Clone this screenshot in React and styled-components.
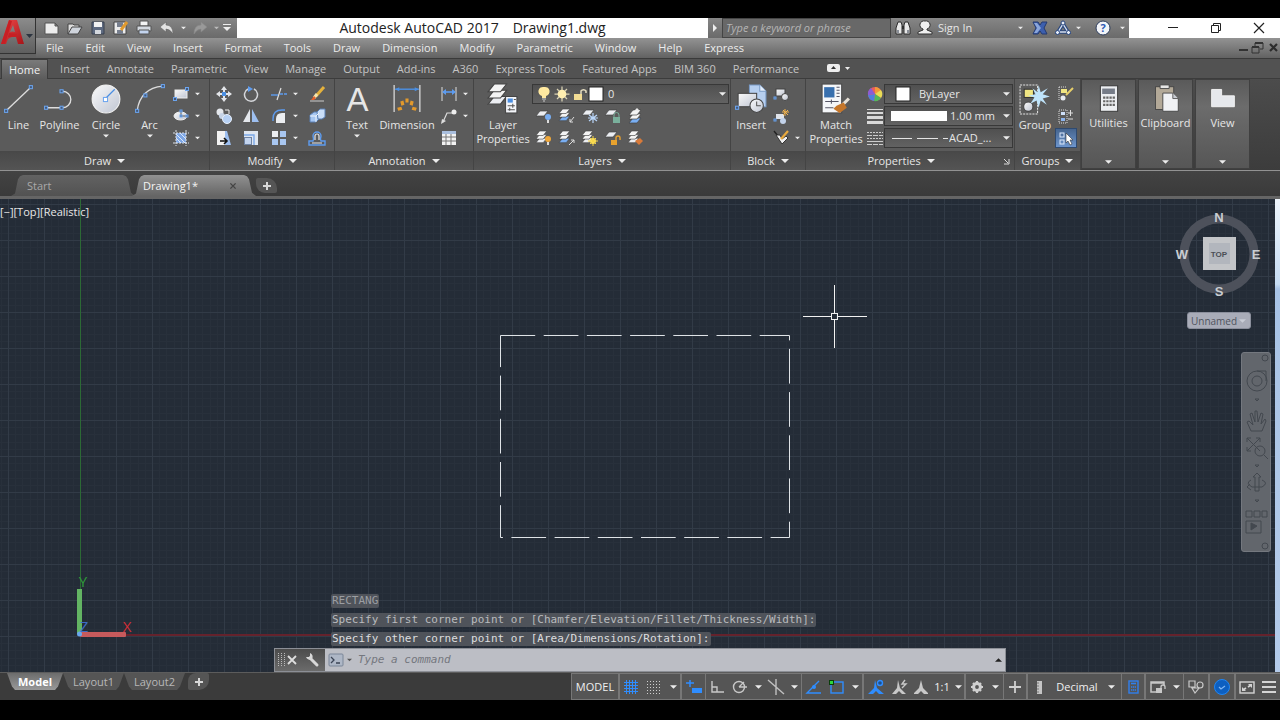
// Libraries
import React from 'react';

// Styles
import styled, { createGlobalStyle, css } from 'styled-components';

const GlobalStyle = createGlobalStyle`
  * {
    box-sizing: border-box;
  }
  html, body, #root {
    height: 100%;
  }
  body {
    margin: 0;
    background: #000;
    color: #e6e6e6;
    font-family: 'Open Sans', 'Noto Sans', sans-serif;
    font-size: 11px;
    line-height: 14px;
  }
  button, input, select {
    margin: 0;
    padding: 0;
    border: 0;
    background: none;
    color: inherit;
    font: inherit;
    appearance: none;
    outline: none;
  }
  button {
    cursor: pointer;
  }
  svg {
    display: block;
    flex: none;
  }
`;

const AppStyle = styled.div`
  display: flex;
  flex-direction: column;
  height: 100%;
  padding: 18px 0 20px;
  overflow: hidden;
`;

// Header
const HeaderStyle = styled.header`
  display: flex;
  align-items: flex-start;
  flex: none;
  background: #626262;
  border-bottom: 1px solid #3a3a3a;
`;

const AppButtonStyle = styled.button`
  display: flex;
  align-items: center;
  width: 36px;
  height: 36px;
  background: linear-gradient(#8c8c8c, #5e5e5e);
  border-right: 1px solid #333;
  border-bottom: 1px solid #333;
`;

const HeaderRowsStyle = styled.div`
  flex: 1;
`;

const TitleBarStyle = styled.div`
  display: flex;
  height: 20px;
`;

const TitleToolsStyle = styled.div`
  display: flex;
  align-items: center;
  padding: 0 4px;
  background: linear-gradient(#868686, #6a6a6a);
`;

const ToolSlotStyle = styled.button`
  display: flex;
  align-items: center;
  justify-content: center;
  flex: none;
  width: ${props => props.$w || 22}px;
  height: 18px;
`;

const TitleStyle = styled.h1`
  display: flex;
  align-items: center;
  justify-content: center;
  flex: 1;
  gap: 14px;
  margin: 0;
  background: #fff;
  color: #222;
  font-size: 14px;
  font-weight: 400;
  line-height: 20px;
`;

const SearchStyle = styled.input`
  width: 169px;
  padding: 0 3px;
  background: #686868;
  border: 1px solid #444;
  font-style: italic;
  &::placeholder {
    color: #b4b4b4;
    opacity: 1;
  }
`;

const SignInStyle = styled.button`
  width: 78px;
  text-align: left;
  white-space: nowrap;
`;

const WindowControlsStyle = styled.div`
  display: flex;
  align-items: center;
  justify-content: flex-end;
  width: 151px;
  background: #fff;
  color: #222;
`;

const MenuBarStyle = styled.nav`
  display: flex;
  align-items: center;
  gap: 22px;
  height: 20px;
  padding-left: 10px;
  background: linear-gradient(#939393, #626262);
  color: #ececec;
`;

const MenuControlsStyle = styled.div`
  display: flex;
  align-items: center;
  margin-left: auto;
`;

// Ribbon
const RibbonTabsStyle = styled.nav`
  display: flex;
  flex: none;
  height: 20px;
  padding-left: 1px;
  background: #525252;
  border-bottom: 1px solid #3c3c3c;
`;

const RibbonTabStyle = styled.button`
  padding: 0 9px 0 8px;
  color: #c4c4c4;
  ${props =>
    props.$active &&
    css`
      height: 20px;
      margin-right: 4px;
      background: linear-gradient(#7a7a7a, #5c5c5c);
      border: 1px solid #3c3c3c;
      border-bottom: 0;
      color: #f2f2f2;
      padding: 0 7px;
    `};
`;

const RibbonStyle = styled.div`
  display: flex;
  flex: none;
  height: 92px;
  background: linear-gradient(#4c4c4c, #3c3c3c);
  border-bottom: 1px solid #929292;
`;

const PanelStyle = styled.section`
  display: flex;
  flex-direction: column;
  flex: none;
  width: ${props => props.$w}px;
  background: #5b5b5b;
  border-right: 1px solid #444;
`;

const PanelBodyStyle = styled.div`
  display: flex;
  flex: 1;
  padding-top: 3px;
`;

const PanelTitleStyle = styled.button`
  display: flex;
  align-items: center;
  justify-content: center;
  gap: 6px;
  height: 19px;
  background: linear-gradient(#484848, #545454);
`;

const PanelTitleTextStyle = styled.span`
  flex: ${props => (props.$spread ? 1 : 'none')};
  display: flex;
  align-items: center;
  justify-content: center;
  gap: 6px;
`;

const BigButtonStyle = styled.button`
  display: flex;
  flex-direction: column;
  align-items: center;
  flex: none;
  width: ${props => props.$w}px;
  height: 69px;
  white-space: pre-line;
  svg + span {
    margin-top: 2px;
  }
  span + svg {
    margin-top: 2px;
  }
`;

const ToolGridStyle = styled.div`
  display: grid;
  grid-template-columns: ${props => props.$columns};
  grid-auto-rows: 22px;
  align-content: start;
  align-items: center;
  justify-items: center;
  padding-top: 1px;
`;

const ToolButtonStyle = styled.button`
  display: flex;
  align-items: center;
  justify-content: center;
  width: 22px;
  height: 20px;
  ${props =>
    props.$pressed &&
    css`
      background: linear-gradient(#46658f, #6d95cc);
      border: 1px solid #2f4a70;
    `};
`;

const StackStyle = styled.div`
  display: flex;
  flex-direction: column;
`;

const ComboStyle = styled.label`
  display: flex;
  align-items: center;
  width: ${props => props.$w}px;
  height: 20px;
  margin-top: 2px;
  padding: 0 2px 0 ${props => props.$left || 4}px;
  background: linear-gradient(#505050, #626262);
  border: 1px solid #383838;
  select {
    flex: 1;
    min-width: 0;
    padding-left: ${props => props.$gap || 0}px;
  }
`;

const CollapsedPanelStyle = styled.button`
  display: flex;
  flex-direction: column;
  align-items: center;
  flex: none;
  width: 55px;
  height: 90px;
  margin-right: 2px;
  padding: 4px 0;
  background: linear-gradient(#5a5a5a, #6c6c6c 30%, #565656);
  border: 1px solid #404040;
  span {
    margin-top: 2px;
  }
  svg:last-child {
    margin-top: auto;
  }
`;

// Drawing tabs
const FileTabsStyle = styled.nav`
  display: flex;
  align-items: flex-end;
  flex: none;
  height: 28px;
  padding-left: 11px;
  background: linear-gradient(#434343, #3a3a3a);
  border-bottom: 3px solid #656565;
`;

const FileTabStyle = styled.button`
  display: flex;
  align-items: center;
  justify-content: space-between;
  width: 124px;
  height: 21px;
  margin-right: -3px;
  padding: 0 16px 0 ${props => (props.$active ? 11 : 16)}px;
  background: ${props =>
    props.$active
      ? 'linear-gradient(#919191, #656565)'
      : 'linear-gradient(#626262, #525252)'};
  color: ${props => (props.$active ? '#f4f4f4' : '#a9a9a9')};
  clip-path: polygon(
    0 100%, 4px 88%, 7px 20%, 9px 6%, 12px 0,
    calc(100% - 12px) 0, calc(100% - 9px) 6%, calc(100% - 7px) 20%,
    calc(100% - 4px) 84%, 100% 100%
  );
`;

const NewTabStyle = styled.button`
  display: flex;
  align-items: center;
  justify-content: center;
  width: 21px;
  height: ${props => (props.$bottom ? 17 : 15)}px;
  margin: ${props => (props.$bottom ? '0 0 0 3px' : '0 0 3px 3px')};
  background: #555;
  border-radius: ${props =>
    props.$bottom ? '8px 2px 10px 2px' : '2px 10px 2px 9px'};
`;

// Drawing area
const WorkspaceStyle = styled.main`
  display: flex;
  flex: 1;
  min-height: 0;
`;

const ViewportStyle = styled.div`
  position: relative;
  flex: 1;
  overflow: hidden;
  background: #242c37;
`;

const EdgeStripStyle = styled.div`
  width: 5px;
  background: linear-gradient(#eef5fc, #c6dcf3 18%, #a8c3e6 19%, #b4cbea);
`;

const ModelSpaceStyle = styled.svg`
  position: absolute;
  inset: 0;
  width: 100%;
  height: 100%;
`;

const ViewLabelStyle = styled.div`
  position: absolute;
  top: 6px;
  left: 0;
  color: #e8e8e8;
`;

const NavigationStyle = styled.div`
  position: absolute;
  top: 11px;
  right: 4px;
  display: flex;
  flex-direction: column;
  align-items: flex-end;
`;

const CubeStyle = styled.div`
  margin-right: 7px;
  text {
    fill: #c9cdd2;
    font-family: 'Liberation Sans', sans-serif;
    font-size: 13px;
    font-weight: 700;
    text-anchor: middle;
  }
  .face {
    fill: #4a4e55;
    font-size: 8px;
  }
`;

const UcsPickerStyle = styled.label`
  display: flex;
  align-items: center;
  width: 64px;
  height: 17px;
  margin: 13px 20px 23px 0;
  padding: 0 4px 0 3px;
  background: #a9acb8;
  border: 1px solid #8b8f9c;
  border-radius: 3px;
  color: #50545e;
  font-size: 10px;
  select {
    flex: 1;
    min-width: 0;
  }
`;

const NavBarStyle = styled.div`
  width: 30px;
  height: 200px;
  background: #62666c;
  border: 1px solid #74787f;
  border-radius: 3px;
`;

const CommandDockStyle = styled.div`
  position: absolute;
  right: 269px;
  bottom: 0;
  left: 274px;
  font-family: 'DejaVu Sans Mono', monospace;
`;

const HistoryStyle = styled.div`
  display: flex;
  flex-direction: column;
  align-items: flex-start;
  gap: 5px;
  padding: 0 0 2px 57px;
`;

const HistoryLineStyle = styled.span`
  padding: 0 1px;
  background: #4f535a;
  border-radius: 2px;
  color: ${props => props.$tone};
`;

const CommandBarStyle = styled.div`
  display: flex;
  align-items: center;
  height: 24px;
  background: #bcbec5;
  border: 1px solid #8c8f96;
`;

const CommandToolsStyle = styled.div`
  display: flex;
  align-items: center;
  align-self: stretch;
  width: 50px;
  padding-left: 2px;
  background: linear-gradient(#4c4c4c, #6b6b6b);
`;

const CommandInputStyle = styled.input`
  flex: 1;
  min-width: 0;
  padding-left: 6px;
  font-style: italic;
  &::placeholder {
    color: #74777e;
    opacity: 1;
  }
`;

// Footer
const FooterStyle = styled.footer`
  display: flex;
  align-items: flex-start;
  flex: none;
  height: 28px;
  padding-left: 7px;
  background: #3b3b3b;
  border-top: 1px solid #5c5c5c;
`;

const LayoutTabStyle = styled.button`
  width: ${props => props.$w}px;
  height: 17px;
  background: ${props =>
    props.$active ? 'linear-gradient(#6c6c6c, #999)' : '#555'};
  color: ${props => (props.$active ? '#fff' : '#b8b8b8')};
  font-weight: ${props => (props.$active ? 700 : 400)};
  clip-path: polygon(
    0 0, 100% 0, calc(100% - 5px) 80%, calc(100% - 8px) 100%, 8px 100%, 5px 80%
  );
`;

const StatusBarStyle = styled.div`
  display: flex;
  gap: 2px;
  height: 27px;
  margin-left: auto;
  background: #777;
  border: 1px solid #777;
  border-right: 0;
`;

const StatusGroupStyle = styled.div`
  display: flex;
  background: #555;
`;

const StatusSlotStyle = styled.button`
  display: flex;
  align-items: center;
  justify-content: center;
  flex: none;
  width: ${props => props.$w || 24}px;
  border-right: ${props => (props.$line ? '1px solid #777' : '0')};
  white-space: nowrap;
  color: #f0f0f0;
`;

const BLUE = '#4b8fe2';

// Small blue grip square used on most of the draw icons
const Grip = ({ x, y, s = 3 }) => (
  <rect
    x={x - s / 2}
    y={y - s / 2}
    width={s}
    height={s}
    fill="#44597a"
    stroke="#6ba4ee"
  />
);

const Sheets = ({ x = 0, y = 0, s = 1, n = 3, low = '#eceef2' }) => (
  <g transform={`translate(${x} ${y}) scale(${s})`}>
    {Array.from({ length: n }, (_, i) => n - 1 - i).map(i => (
      <path
        key={i}
        d={`M4 ${i * 4} h8 l-4 5 h-8z`}
        fill={i === n - 1 ? low : '#f4f4f4'}
        stroke="#444"
        strokeWidth=".7"
      />
    ))}
  </g>
);

const glyphs = {
  // Draw
  line: (
    <>
      <path d="M4 28 28 5" stroke="#ddd" strokeWidth="1.3" />
      <Grip x={4} y={28} />
      <Grip x={28} y={5} />
    </>
  ),
  polyline: (
    <>
      <path
        d="M3 25 H19 A8 8 0 0 0 19 9"
        fill="none"
        stroke="#ddd"
        strokeWidth="1.3"
      />
      <Grip x={3} y={25} />
      <Grip x={18} y={25} />
      <Grip x={18} y={9} />
    </>
  ),
  circle: (
    <>
      <circle cx="16.5" cy="16.5" r="13.5" fill="url(#pearl)" stroke="#f4f4f4" />
      <path d="M16 16 25 7" stroke={BLUE} strokeWidth="1.2" />
      <rect x="14" y="15" width="4" height="4" fill="#fff" stroke="#6ba4ee" />
    </>
  ),
  arc: (
    <>
      <path
        d="M4 28 Q7 6 29 4"
        fill="none"
        stroke="#ddd"
        strokeWidth="1.3"
      />
      <Grip x={4} y={28} />
      <Grip x={12} y={13} />
      <Grip x={29} y={4} />
    </>
  ),
  rectangle: (
    <>
      <rect x="2" y="4" width="12" height="8" fill="url(#pearl)" stroke="#eee" />
      <Grip x={2} y={13} />
      <Grip x={14} y={3} />
    </>
  ),
  ellipse: (
    <>
      <ellipse cx="7.500" cy="8" rx="6.500" ry="4" fill="url(#pearl)" stroke="#eee" />
      <path d="M8 8V3M8 8H14" stroke="#555" />
      <Grip x={8} y={8} s={2} />
      <Grip x={8} y={3} s={2} />
      <Grip x={14} y={8} s={2} />
    </>
  ),
  hatch: (
    <>
      <rect x="3" y="3" width="10" height="10" fill="#7ea7e6" />
      <path d="M3 8 8 13M3 4 12 13M7 3 13 9" stroke="#dce8fa" />
      <path
        d="M3 0V16M13 0V16M0 3H16M0 13H16"
        stroke="#dde2ea"
        strokeDasharray="2 1"
      />
    </>
  ),
  // Modify
  move: (
    <>
      <path
        d="M8 0 11 4H9V6H7V4H5zM8 16 5 12H7V10H9V12H11zM0 8 4 5V7H6V9H4V11zM16 8 12 11V9H10V7H12V5z"
        fill="#e4e6ea"
      />
      <rect x="6" y="6" width="4" height="4" fill={BLUE} />
    </>
  ),
  rotate: (
    <>
      <path
        d="M5 3 A6.5 6.5 0 1 0 11 3"
        fill="none"
        stroke="#d4d6da"
        strokeWidth="1.5"
      />
      <path d="M5 0 10 3 5 6z" fill="#5d9cf0" />
    </>
  ),
  trim: (
    <>
      <path d="M10 2 6 14" stroke="#e0e0e0" strokeWidth="1.2" />
      <path d="M0 9H7" stroke="#5d9cf0" strokeWidth="1.4" />
      <path
        d="M9 8H16"
        stroke="#5d9cf0"
        strokeWidth="1.4"
        strokeDasharray="3 1"
      />
    </>
  ),
  erase: (
    <>
      <path d="M15 1 7 10" stroke="#e5b23c" strokeWidth="3" />
      <path d="M8 8 5 12" stroke="#f5e6b0" strokeWidth="3" />
      <path d="M5 10 2 14H5L7 12z" fill="#e3602c" />
      <path d="M1 15H15" stroke="#ccc" />
    </>
  ),
  copy: (
    <>
      <circle cx="4" cy="4" r="3.5" fill="#e4e7ec" />
      <circle cx="6" cy="8" r="3" fill="#c6d3e6" />
      <circle cx="11" cy="11" r="4.5" fill="#b6d0f4" stroke="#e8f0fb" />
      <path d="M9 2H13V6" fill="none" stroke="#eee" />
    </>
  ),
  mirror: (
    <>
      <path d="M7 1V14H0z" fill="#e4e7ec" />
      <path d="M9 1V14H16z" fill="#9dbff0" />
    </>
  ),
  fillet: (
    <>
      <path d="M5 15V11Q5 5 11 5H14V15z" fill="#eceef1" />
      <path
        d="M2 13V11Q2 2 11 2H14"
        fill="none"
        stroke="#5d9cf0"
        strokeWidth="1.4"
      />
    </>
  ),
  explode: (
    <>
      <path d="M1 7 5 4H10V11L7 14H1z" fill="#a5c6f2" stroke="#5a80b6" />
      <path d="M8 4 11 1H16V9L13 11H9z" fill="#cadef8" stroke="#5a80b6" />
      <path d="M1 8H7V14M7 8 10 5" fill="none" stroke="#eef4fc" />
    </>
  ),
  stretch: (
    <>
      <path d="M1 1H9V15H1z" fill="#f2f2f2" />
      <path d="M9 1H11L15 15H9z" fill="#9dbff0" />
      <path d="M4 11H10M8 8 11 11 8 14" fill="none" stroke="#111" strokeWidth="1.6" />
    </>
  ),
  scale: (
    <>
      <rect x="1" y="1" width="14" height="14" fill="#dfe6f0" />
      <path d="M1 5H11V15" fill="none" stroke="#7ba8e8" strokeWidth="1.4" />
      <rect x="1" y="7" width="8" height="8" fill="#6f83a3" />
      <rect x="2" y="8" width="6" height="6" fill="#c3d4ee" />
    </>
  ),
  array: (
    <>
      <rect x="1" y="1" width="6" height="6" fill="#eceef2" />
      <rect x="9" y="1" width="6" height="6" fill="#a8c6f0" />
      <rect x="1" y="9" width="6" height="6" fill="#a8c6f0" />
      <rect x="9" y="9" width="6" height="6" fill="#a8c6f0" />
    </>
  ),
  offset: (
    <>
      <path
        d="M0 15H16V11H12Q11 9 12 6 A4 4 0 0 0 4 6 Q5 9 4 11H0z"
        fill="none"
        stroke="#5d9cf0"
        strokeWidth="1.4"
      />
      <path
        d="M3 13H13M6 10V6A2 2 0 0 1 10 6V10"
        fill="none"
        stroke="#e4e6ea"
        strokeWidth="1.2"
      />
    </>
  ),
  // Annotation
  text: (
    <text
      x="17"
      y="28"
      fill="#e6e6e6"
      fontFamily="Liberation Sans, sans-serif"
      fontSize="32"
      textAnchor="middle"
    >
      A
    </text>
  ),
  dimension: (
    <>
      <path d="M4 3V29M29 3V29" stroke="#ddd" strokeWidth="1.2" />
      <path d="M5 7H28" stroke={BLUE} strokeWidth="1.4" />
      <path d="M5 7 9 5V9zM28 7 24 5V9z" fill={BLUE} />
      <path
        d="M15 16H18V20H15zM10 19 13 18 14 22 11 23zM23 19 20 18 19 22 22 23zM7 25 11 24 12 27 8 28zM26 25 22 24 21 27 25 28z"
        fill="#e2992c"
      />
    </>
  ),
  linear: (
    <>
      <path d="M1 1V15M15 1V15" stroke="#ddd" />
      <path d="M2 6H14" stroke="#5d9cf0" strokeWidth="1.6" />
      <path d="M1 6 5 3V9zM15 6 11 3V9z" fill="#5d9cf0" />
    </>
  ),
  leader: (
    <>
      <path d="M2 14 6 5H11" fill="none" stroke="#ddd" strokeWidth="1.2" />
      <path d="M0 16 1 11 5 13z" fill="#ddd" />
      <circle cx="13" cy="4" r="2.5" fill="#eee" />
    </>
  ),
  table: (
    <>
      <rect x="1" y="1" width="14" height="14" fill="#f2f2f2" />
      <rect x="1" y="1" width="14" height="3" fill="#a9bedd" />
      <path d="M1 7H15M1 11H15M5 4V15M10 4V15" stroke="#777" />
    </>
  ),
  // Layers
  layerProps: (
    <>
      <Sheets x={2} y={2} s={1.5} />
      <path d="M19 14H30V30H19z" fill="#f4f6fa" stroke="#444" />
      <path d="M21 16H26V20H21z" fill={BLUE} />
      <path d="M27 17H29M21 23H28M21 27H28M23 25V28M26 21V25" stroke="#555" />
    </>
  ),
  layerOff: (
    <>
      <Sheets y={3} n={1} />
      <circle cx="12" cy="9" r="3" fill="#79aef2" />
      <path d="M12 12V15" stroke="#ddd" strokeWidth="2" />
    </>
  ),
  layerIso: (
    <>
      <Sheets y={1} s={0.9} low="#79aef2" />
      <path d="M15 9 11 14M11 11V14H14" fill="none" stroke="#ddd" />
    </>
  ),
  layerFreeze: (
    <>
      <Sheets y={2} n={1} />
      <path
        d="M11 5V15M7 7 15 13M15 7 7 13M6 10H16"
        stroke="#b9d6fa"
        strokeWidth="1.2"
      />
    </>
  ),
  layerLock: (
    <>
      <Sheets y={2} n={1} />
      <rect x="8" y="9" width="7" height="6" fill="#7ab09c" />
      <path d="M9 9V7A2 2 0 0 1 14 7V9" fill="none" stroke="#7ab09c" />
    </>
  ),
  layerCurrent: (
    <>
      <Sheets x={1} y={2} low="#79aef2" />
      <path d="M9 0 12 3H6z" fill="#eee" />
    </>
  ),
  layerOn: (
    <>
      <Sheets y={1} s={0.9} />
      <circle cx="12" cy="9" r="3" fill="#f0a83a" />
      <path d="M12 12V15" stroke="#ddd" strokeWidth="2" />
    </>
  ),
  layerUniso: (
    <>
      <Sheets y={1} s={0.9} low="#79aef2" />
      <path d="M10 15 15 10M12 10H15V13" fill="none" stroke="#ddd" />
    </>
  ),
  layerThaw: (
    <>
      <Sheets y={1} s={0.9} />
      <circle cx="11" cy="11" r="3" fill="#ffe45e" />
      <path d="M11 6V16M6 11H16M8 8 14 14M14 8 8 14" stroke="#f5d548" />
    </>
  ),
  layerUnlock: (
    <>
      <Sheets y={2} n={1} />
      <rect x="6" y="10" width="6" height="5" fill="#e8a22e" />
      <path
        d="M11 10V8A2 2 0 0 1 15 8V10"
        fill="none"
        stroke="#e8a22e"
        strokeWidth="1.4"
      />
    </>
  ),
  layerMatch: (
    <>
      <Sheets y={1} s={0.9} />
      <path d="M7 11 12 8 15 11 11 15z" fill="#d87a3a" />
    </>
  ),
  bulb: (
    <>
      <path
        d="M8 1A4.5 4.5 0 0 1 10 10V12H6V10A4.5 4.5 0 0 1 8 1z"
        fill="#ffe9a0"
      />
      <path d="M6 13H10M7 15H9" stroke="#ccc" />
    </>
  ),
  sun: (
    <>
      <path d="M8 2V14M2 8H14M4 4 12 12M12 4 4 12" stroke="#d9d2b4" />
      <circle cx="8" cy="8" r="3.5" fill="#ffeeb0" />
    </>
  ),
  lock: (
    <>
      <rect x="2" y="8" width="8" height="6" fill="#f2dc94" />
      <path
        d="M9 8V5A3 3 0 0 1 14 5V7"
        fill="none"
        stroke="#e4dcc0"
        strokeWidth="1.5"
      />
    </>
  ),
  swatch: <rect x="1" y="1" width="14" height="14" fill="#fff" stroke="#222" />,
  // Block
  insert: (
    <>
      <path d="M15 3H25L31 9V24H15z" fill="#b6cff0" stroke="#7a9cc8" />
      <path d="M25 3V9H31" fill="#e4eefb" stroke="#7a9cc8" />
      <rect x="4" y="11" width="18" height="13" fill="url(#pearl)" stroke="#444" />
      <circle cx="22" cy="23" r="6.5" fill="url(#pearl)" stroke="#444" />
      <path d="M22 19V23H26" fill="none" stroke="#555" />
      <Grip x={3} y={25} />
    </>
  ),
  createBlock: (
    <>
      <rect x="3" y="3" width="9" height="7" fill="url(#pearl)" stroke="#444" />
      <circle cx="12" cy="11" r="3.5" fill="url(#pearl)" stroke="#444" />
      <Grip x={2} y={12} s={2} />
    </>
  ),
  editBlock: (
    <>
      <rect x="3" y="6" width="8" height="5" fill="#dfe3ea" />
      <circle cx="10" cy="13" r="3" fill="#c2d2ea" />
      <path d="M12 1V8M9 4H16M10 2 15 7M15 2 10 7" stroke="#f4b44c" />
      <Grip x={2} y={12} s={2} />
    </>
  ),
  attributes: (
    <>
      <path d="M1 1 5 6" fill="none" stroke="#222" strokeWidth="1.4" />
      <path d="M3 5H7L9 9 13 6 15 8 9 14z" fill="#f0f0f0" stroke="#333" />
      <path d="M15 1 8 9" stroke="#e9a93c" strokeWidth="2.2" />
    </>
  ),
  // Properties
  match: (
    <>
      <rect x="3" y="2" width="19" height="28" fill="#f4f6f9" stroke="#4a4a4a" />
      <rect x="5" y="5" width="10" height="10" fill="#376fae" />
      <path
        d="M17 5H20M17 8H20M17 11H20M17 14H20M6 19H19M6 25H14M12 17V21"
        stroke="#556"
      />
      <path d="M29 16 23 22" stroke="#e8e2d8" strokeWidth="3" />
      <path d="M17 23 24 20 27 25 20 30 14 26z" fill="#c5762a" />
    </>
  ),
  wheel: (
    <>
      <circle cx="8" cy="8" r="7" fill="#e85e5e" />
      <path d="M8 8V1A7 7 0 0 1 14 5z" fill="#f29a38" />
      <path d="M8 8 14 4A7 7 0 0 1 14 12z" fill="#e9dc55" />
      <path d="M8 8 14 12A7 7 0 0 1 7 15z" fill="#53b95b" />
      <path d="M8 8 7 15A7 7 0 0 1 1 9z" fill="#4f7fe0" />
      <path d="M8 8 1 9A7 7 0 0 1 4 2z" fill="#8b5cd6" />
    </>
  ),
  weights: (
    <path
      d="M0 1H16V2H0zM0 4H16V6H0zM0 8H16V11H0zM0 13H16V16H0z"
      fill="#d9d9d9"
    />
  ),
  linetypes: (
    <>
      <path d="M0 2.500H16M0 8.500H16" stroke="#ccc" strokeDasharray="2 1" />
      <path d="M0 5.500H16M0 14.500H16" stroke="#ccc" strokeDasharray="5 1" />
      <path d="M0 11.500H16" stroke="#ccc" />
    </>
  ),
  // Groups
  group: (
    <>
      <rect
        x="2"
        y="3"
        width="17"
        height="28"
        fill="none"
        stroke="#e4e4e4"
        strokeDasharray="2 1"
      />
      <rect x="6" y="7" width="9" height="8" fill="#f0e582" stroke="#333" />
      <circle cx="10" cy="24" r="4.5" fill="url(#pearl)" stroke="#444" />
      <path
        d="M20 3 22 10 29 6 24 12 31 14 24 16 28 22 22 18 20 25 18 18 12 21 16 15 10 13 17 12 14 6 19 10z"
        fill="#bfe4fb"
      />
    </>
  ),
  ungroup: (
    <>
      <path d="M1 1H9M1 1V15" stroke="#ddd" strokeDasharray="1 1" />
      <rect x="3" y="3" width="6" height="4" fill="#f0e582" />
      <circle cx="5" cy="12" r="2.5" fill="#e8ecf2" />
      <path d="M15 2 8 9" stroke="#e7cf6a" strokeWidth="2" />
    </>
  ),
  groupEdit: (
    <>
      <rect
        x="1"
        y="2"
        width="8"
        height="13"
        fill="none"
        stroke="#ddd"
        strokeDasharray="1 1"
      />
      <rect x="3" y="4" width="4" height="3" fill="#cfe0f8" />
      <rect x="3" y="10" width="4" height="3" fill="#8cb4ee" />
      <path d="M10 5H15M12.5 2V8M10 11H15" stroke="#ddd" />
    </>
  ),
  groupSelect: (
    <>
      <rect x="2" y="3" width="4" height="4" fill="none" stroke="#dde9fb" />
      <rect x="2" y="10" width="4" height="4" fill="none" stroke="#dde9fb" />
      <path
        d="M8 3V13L10 11 12 15 14 14 12 10H15z"
        fill="#fff"
        stroke="#333"
        strokeWidth=".6"
      />
    </>
  ),
  calculator: (
    <>
      <rect x="7" y="2" width="19" height="28" fill="#eceef1" stroke="#333" />
      <rect x="9" y="5" width="14" height="6" fill="#767c88" />
      <path
        d="M10 15H23M10 19H23M10 23H23"
        stroke="#666"
        strokeWidth="2.4"
        strokeDasharray="2.5 1"
      />
    </>
  ),
  clipboard: (
    <>
      <rect x="5" y="3" width="20" height="25" fill="#b3a998" stroke="#444" />
      <path d="M10 1H20V5H10z" fill="#e6e6e6" stroke="#444" />
      <path d="M13 10H24L30 16V30H13z" fill="#f0f1f4" stroke="#444" />
      <path d="M24 10V16H30" fill="#c9ccd2" stroke="#555" />
    </>
  ),
  view: <path d="M4 6H15V13H29V25H4z" fill="#e6e8ec" stroke="#f6f6f6" />,
  // Title bar
  newFile: (
    <path d="M1 3H11L14 6V14H1zM11 3V6H14" fill="#ededed" stroke="#555" />
  ),
  open: (
    <>
      <path d="M1 14V4H6L7 5H12V8" fill="#ddd" stroke="#444" />
      <path d="M1 14 5 7H15L11 14z" fill="#cfd4dc" stroke="#444" />
    </>
  ),
  save: (
    <>
      <path d="M2 2H14V14H2z" fill="#5e6a80" stroke="#39414f" />
      <path d="M4 2H12V7H4z" fill="#f2f2f2" />
      <path d="M5 10H11V14H5z" fill="#d4d8de" />
    </>
  ),
  saveAs: (
    <>
      <path d="M1 2H13V14H1z" fill="#ececec" stroke="#444" />
      <path d="M4 2H10V7H4zM4 10H10V14H4z" fill="#777f8e" />
      <path d="M14 2 8 10" stroke="#e09a2e" strokeWidth="3" />
    </>
  ),
  print: (
    <>
      <path d="M4 1H12V6H4z" fill="#f4f4f4" stroke="#555" />
      <path d="M1 6H15V11H1z" fill="#d4d9e0" stroke="#555" />
      <path d="M3 10H13V14H3z" fill="#c3d4ee" stroke="#555" />
    </>
  ),
  undo: (
    <path
      d="M1 7 7 2V5Q14 5 14 14Q11 9 7 9V12z"
      fill="#e2e2e2"
      stroke="#666"
      strokeWidth=".6"
    />
  ),
  redo: (
    <path
      d="M15 7 9 2V5Q2 5 2 14Q5 9 9 9V12z"
      fill="#999"
      stroke="#888"
      strokeWidth=".6"
    />
  ),
  customise: <path d="M4 4H12V5H4zM4 7H12L8 11z" fill="#eee" />,
  binoculars: (
    <>
      <path
        d="M3 2H6L7 5V14H1V8zM10 2H13L15 8V14H9V5z"
        fill="#e8e8e8"
        stroke="#2d2d2d"
      />
      <path d="M7 6H9V9H7z" fill="#2d2d2d" />
      <path d="M3 10V13M13 10V13" stroke="#8a8f98" strokeWidth="2" />
    </>
  ),
  user: (
    <path
      d="M8 1A4 4 0 0 1 10 9V10L15 12V14H1V12L6 10V9A4 4 0 0 1 8 1z"
      fill="#f0f0f0"
      stroke="#333"
    />
  ),
  exchange: (
    <>
      <path
        d="M1 2H6L8 5 10 2H15L12 8 15 14H10L8 11 6 14H1L4 8z"
        fill="#3c5fae"
        stroke="#243a70"
      />
      <path d="M2 3H5L9 8 5 13H2L5 8z" fill="#8ba6da" />
    </>
  ),
  a360: (
    <>
      <path d="M8 4 13 12H3z" fill="none" stroke="#29477f" strokeWidth="3.6" />
      <path d="M8 4 13 12H3z" fill="none" stroke="#d6dfee" strokeWidth="1.4" />
      <circle cx="8" cy="3" r="2" fill="#e8eef8" stroke="#29477f" />
      <circle cx="2.500" cy="12.500" r="2" fill="#e8eef8" stroke="#29477f" />
      <circle cx="13.500" cy="12.500" r="2" fill="#e8eef8" stroke="#29477f" />
    </>
  ),
  help: (
    <>
      <circle cx="8" cy="8" r="7" fill="#f2f4f8" stroke="#2c3c5c" />
      <text
        x="8"
        y="12"
        fill="#2b59b4"
        fontSize="11"
        fontWeight="700"
        textAnchor="middle"
      >
        ?
      </text>
    </>
  ),
  minimize: <path d="M3 7.500H13" stroke="currentColor" />,
  restore: (
    <path
      d="M3.500 5.500H10.500V12.500H3.500zM5.500 5.500V3.500H12.500V10.500H10.500"
      fill="none"
      stroke="currentColor"
    />
  ),
  close: <path d="M3 3 13 13M13 3 3 13" stroke="currentColor" strokeWidth="1.2" />,
  docMinimize: <path d="M4 10H13" stroke="#333" strokeWidth="2" />,
  docRestore: (
    <>
      <path d="M2 7H9V13H2zM5 6V3H13V9H10" fill="none" stroke="#333" />
      <path d="M2 7H9M5 3H13" stroke="#333" strokeWidth="2" />
    </>
  ),
  docClose: <path d="M5 4 12 11M12 4 5 11" stroke="#2c2c2c" strokeWidth="2.2" />,
  plus: <path d="M8 4V12M4 8H12" stroke="#d8d8d8" strokeWidth="2" />,
  tabClose: <path d="M5 5 11 11M11 5 5 11" stroke="#444" strokeWidth="1.6" />,
  // Command line
  cmdClose: <path d="M4 4 12 12M12 4 4 12" stroke="#dedede" strokeWidth="1.8" />,
  wrench: (
    <>
      <path
        d="M6 6 13 13"
        stroke="#d8d8d8"
        strokeWidth="3"
        strokeLinecap="round"
      />
      <path d="M2 5A4 4 0 0 0 8 7A4 4 0 0 0 6 1V4L5 5z" fill="#d8d8d8" />
    </>
  ),
  prompt: (
    <>
      <rect
        x="1"
        y="2"
        width="14"
        height="12"
        rx="1"
        fill="#aeb7c6"
        stroke="#7b8698"
      />
      <path
        d="M3 5 6 8 3 11M8 11H12"
        fill="none"
        stroke="#3c4556"
        strokeWidth="1.3"
      />
    </>
  ),
  // Status bar
  grid: (
    <path
      d="M3.500 1V15M6.500 1V15M9.500 1V15M12.500 1V15M1 3.500H15M1 6.500H15M1 9.500H15M1 12.500H15"
      stroke="#2f8dff"
    />
  ),
  snap: (
    <path
      d="M1 2.500H15M1 5.500H15M1 8.500H15M1 11.500H15M1 14.500H15"
      stroke="#cfcfcf"
      strokeDasharray="1 2"
    />
  ),
  dynamic: (
    <>
      <path d="M4 1V8M0 4H8" stroke="#2f8dff" strokeWidth="1.5" />
      <rect x="6" y="9" width="10" height="5" fill="#2f8dff" />
    </>
  ),
  ortho: (
    <path
      d="M3 2V13H15M3 8H8V13"
      fill="none"
      stroke="#c8c8c8"
      strokeWidth="1.4"
    />
  ),
  polar: (
    <>
      <circle
        cx="7"
        cy="8"
        r="5.5"
        fill="none"
        stroke="#c8c8c8"
        strokeWidth="1.4"
      />
      <path d="M7 8H15M7 8 12 3" stroke="#c8c8c8" strokeWidth="1.3" />
    </>
  ),
  iso: <path d="M8 0V16M0 1 16 15" stroke="#c0c0c0" strokeWidth="1.4" />,
  tracking: (
    <>
      <path d="M14 2 2 14H16" fill="none" stroke="#2f8dff" strokeWidth="1.4" />
      <circle cx="9" cy="8" r="2" fill="#2f8dff" />
    </>
  ),
  osnap: (
    <>
      <rect
        x="3"
        y="3"
        width="12"
        height="11"
        fill="none"
        stroke="#2f8dff"
        strokeWidth="1.4"
      />
      <rect x="1" y="1" width="5" height="5" fill="#0a3d0a" />
      <rect x="2" y="2" width="3" height="3" fill="#2ed63a" />
    </>
  ),
  annoOn: (
    <>
      <path d="M7 1 9 9 16 15H11L8 12 5 15H0L6 9z" fill="#2f8dff" />
      <circle
        cx="12"
        cy="4"
        r="2.5"
        fill="#1d4f8f"
        stroke="#2f8dff"
        strokeWidth="1.4"
      />
    </>
  ),
  annoAuto: (
    <>
      <path d="M7 1 9 9 15 15H11L8 12 5 15H1L6 9z" fill="#c8c8c8" />
      <path
        d="M14 1 11 5H15L11 9"
        fill="none"
        stroke="#c8c8c8"
        strokeWidth="1.4"
      />
    </>
  ),
  anno: <path d="M8 1 10 9 15 14V15H11L8 12 5 15H1V14L6 9z" fill="#c8c8c8" />,
  gear: (
    <>
      <circle
        cx="8"
        cy="8"
        r="3.4"
        fill="none"
        stroke="#cfcfcf"
        strokeWidth="3"
      />
      <path
        d="M8 2V4M8 12V14M2 8H4M12 8H14M4 4 5 5M11 11 12 12M12 4 11 5M5 11 4 12"
        stroke="#cfcfcf"
        strokeWidth="2.2"
      />
    </>
  ),
  bigPlus: <path d="M8 2V14M2 8H14" stroke="#cfcfcf" strokeWidth="1.8" />,
  ruler: (
    <>
      <rect x="5" y="2" width="5" height="13" fill="#c4c4c4" />
      <path d="M5 4H7M5 7H7M5 10H7M5 13H7" stroke="#777" />
    </>
  ),
  quick: (
    <>
      <rect
        x="4"
        y="2"
        width="9"
        height="12"
        fill="none"
        stroke="#2f7fee"
        strokeWidth="1.4"
      />
      <path d="M6 4.500H11" stroke="#2f7fee" strokeWidth="1.6" />
      <path
        d="M6 8H11M6 11H11"
        stroke="#2f7fee"
        strokeWidth="1.6"
        strokeDasharray="1.300 .6"
      />
    </>
  ),
  lockUi: (
    <>
      <path
        d="M6 13H1V3H14V6M1 4H14"
        fill="none"
        stroke="#c8c8c8"
        strokeWidth="1.5"
      />
      <rect x="6" y="9" width="6" height="5" fill="#c8c8c8" />
      <path
        d="M11 9V8A2 2 0 0 1 15 8V10"
        fill="none"
        stroke="#c8c8c8"
        strokeWidth="1.3"
      />
    </>
  ),
  isolate: (
    <>
      <path
        d="M1 2H7V8H1zM4 9 11 9 7 14z"
        fill="none"
        stroke="#c8c8c8"
        strokeWidth="1.2"
      />
      <circle
        cx="12"
        cy="6"
        r="3"
        fill="#555"
        stroke="#c8c8c8"
        strokeWidth="1.2"
      />
    </>
  ),
  performance: (
    <>
      <circle cx="8" cy="8" r="7.5" fill="#0d5fc0" stroke="#1f86f5" />
      <path d="M5 8 7 10 11 7" fill="none" stroke="#7fb6f5" strokeWidth="1.2" />
    </>
  ),
  fullscreen: (
    <>
      <rect
        x="1"
        y="3"
        width="14"
        height="11"
        fill="none"
        stroke="#d4d4d4"
        strokeWidth="1.4"
      />
      <path d="M4 11 7 9M9 8 12 6" stroke="#d4d4d4" strokeWidth="1.6" />
      <path d="M3 8V12H7zM13 9V5H9z" fill="#d4d4d4" />
    </>
  ),
  menu: <path d="M1 3H15M1 8H15M1 13H15" stroke="#d4d4d4" strokeWidth="1.8" />
};

// Components
const Glyph = ({ name, size = 16 }) => (
  <svg
    width={size}
    height={size}
    viewBox={size > 20 ? '0 0 33 33' : '0 0 16 16'}
    overflow="visible"
    aria-hidden="true"
  >
    {glyphs[name]}
  </svg>
);

const Arrow = ({ w = 7, color = '#ececec', up = false }) => (
  <svg width={w} height="4" viewBox="0 0 8 4" aria-hidden="true">
    <path d={up ? 'M0 4H8L4 0z' : 'M0 0H8L4 4z'} fill={color} />
  </svg>
);

const BigButton = ({ icon, label, w, arrow }) => (
  <BigButtonStyle type="button" $w={w}>
    <Glyph name={icon} size={34} />
    <span>{label}</span>
    {arrow && <Arrow w={6} />}
  </BigButtonStyle>
);

const Tool = ({ icon, label, pressed }) => (
  <ToolButtonStyle type="button" aria-label={label || icon} $pressed={pressed}>
    <Glyph name={icon} />
  </ToolButtonStyle>
);

const Panel = ({ title, w, spread, children }) => (
  <PanelStyle $w={w}>
    <PanelBodyStyle>{children}</PanelBodyStyle>
    <PanelTitleStyle type="button">
      <PanelTitleTextStyle $spread={spread}>
        {title}
        <Arrow w={8} />
      </PanelTitleTextStyle>
      {spread && (
        <svg width="12" height="8" viewBox="0 0 12 8" aria-hidden="true">
          <path d="M2 2 6 6M7 2V7H2" fill="none" stroke="#ddd" />
        </svg>
      )}
    </PanelTitleStyle>
  </PanelStyle>
);

const Combo = ({ w, left, gap, label, value, children }) => (
  <ComboStyle $w={w} $left={left} $gap={gap}>
    {children}
    <select aria-label={label} defaultValue={value}>
      <option>{value}</option>
    </select>
    <Arrow />
  </ComboStyle>
);

const Slot = ({ icon, w, line, text, label }) => (
  <StatusSlotStyle
    type="button"
    $w={w}
    $line={line}
    aria-label={label || icon || text}
  >
    {icon ? <Glyph name={icon} /> : text || <Arrow />}
  </StatusSlotStyle>
);

const menus = [
  'File',
  'Edit',
  'View',
  'Insert',
  'Format',
  'Tools',
  'Draw',
  'Dimension',
  'Modify',
  'Parametric',
  'Window',
  'Help',
  'Express'
];

const ribbonTabs = [
  'Home',
  'Insert',
  'Annotate',
  'Parametric',
  'View',
  'Manage',
  'Output',
  'Add-ins',
  'A360',
  'Express Tools',
  'Featured Apps',
  'BIM 360',
  'Performance'
];

const layerTools = [
  'layerOff',
  'layerIso',
  'layerFreeze',
  'layerLock',
  'layerCurrent',
  'layerOn',
  'layerUniso',
  'layerThaw',
  'layerUnlock',
  'layerMatch'
];

const DefsStyle = styled.svg`
  position: absolute;
`;

const Defs = () => (
  <DefsStyle width="0" height="0" aria-hidden="true">
    <defs>
      <linearGradient id="pearl" x1="0" y1="0" x2="1" y2="1">
        <stop offset="0" stopColor="#fafafa" />
        <stop offset="1" stopColor="#bfc5d2" />
      </linearGradient>
      <linearGradient id="logo" x1="0" y1="0" x2="1" y2="1">
        <stop offset="0" stopColor="#ee4b4b" />
        <stop offset="1" stopColor="#a81318" />
      </linearGradient>
    </defs>
  </DefsStyle>
);

const Header = () => (
  <HeaderStyle>
    <AppButtonStyle type="button" aria-label="Application menu">
      <svg width="35" height="34" viewBox="0 0 35 34">
        <path
          d="M1 25 9 1H17L24 25H18L16 18Q12 17 8 20L6 25zM10 13Q12 12 15 13L13 6z"
          fill="url(#logo)"
          fillRule="evenodd"
        />
        <path d="M1 25 9 1 12 2 5 25zM9 14 17 15 16 18 8 18z" fill="#c81f24" />
        <path d="M26 15H33L29.500 19z" fill="#2c3440" />
      </svg>
    </AppButtonStyle>
    <HeaderRowsStyle>
      <TitleBarStyle>
        <TitleToolsStyle>
          {['newFile', 'open', 'save', 'saveAs', 'print', 'undo'].map(name => (
            <ToolSlotStyle key={name} type="button" aria-label={name} $w={23}>
              <Glyph name={name} />
            </ToolSlotStyle>
          ))}
          <ToolSlotStyle type="button" aria-label="Undo list" $w={10}>
            <Arrow w={5} />
          </ToolSlotStyle>
          <ToolSlotStyle type="button" aria-label="redo" $w={23}>
            <Glyph name="redo" />
          </ToolSlotStyle>
          <ToolSlotStyle type="button" aria-label="Redo list" $w={10}>
            <Arrow w={5} color="#bbb" />
          </ToolSlotStyle>
          <ToolSlotStyle type="button" aria-label="Customise" $w={12}>
            <Glyph name="customise" />
          </ToolSlotStyle>
        </TitleToolsStyle>
        <TitleStyle>
          <span>Autodesk AutoCAD 2017</span>
          <span>Drawing1.dwg</span>
        </TitleStyle>
        <TitleToolsStyle>
          <svg width="6" height="8" viewBox="0 0 6 8">
            <path d="M1 0V8L5 4z" fill="#eee" />
          </svg>
        </TitleToolsStyle>
        <SearchStyle aria-label="Search" placeholder="Type a keyword or phrase" />
        <TitleToolsStyle>
          <ToolSlotStyle type="button" aria-label="Find" $w={16}>
            <Glyph name="binoculars" />
          </ToolSlotStyle>
          <ToolSlotStyle type="button" aria-label="Account" $w={27}>
            <Glyph name="user" />
          </ToolSlotStyle>
          <SignInStyle type="button">Sign In</SignInStyle>
          <ToolSlotStyle type="button" aria-label="Account list" $w={8}>
            <Arrow w={5} />
          </ToolSlotStyle>
          <ToolSlotStyle type="button" aria-label="Exchange" $w={32}>
            <Glyph name="exchange" />
          </ToolSlotStyle>
          <ToolSlotStyle type="button" aria-label="A360" $w={14}>
            <Glyph name="a360" />
          </ToolSlotStyle>
          <ToolSlotStyle type="button" aria-label="A360 list" $w={16}>
            <Arrow w={5} />
          </ToolSlotStyle>
          <ToolSlotStyle type="button" aria-label="Help" $w={34}>
            <Glyph name="help" />
          </ToolSlotStyle>
          <ToolSlotStyle type="button" aria-label="Help list" $w={5}>
            <Arrow w={5} />
          </ToolSlotStyle>
        </TitleToolsStyle>
        <WindowControlsStyle>
          {['minimize', 'restore', 'close'].map(name => (
            <ToolSlotStyle key={name} type="button" aria-label={name} $w={43}>
              <Glyph name={name} />
            </ToolSlotStyle>
          ))}
        </WindowControlsStyle>
      </TitleBarStyle>
      <MenuBarStyle>
        {menus.map(name => (
          <button key={name} type="button">
            {name}
          </button>
        ))}
        <MenuControlsStyle>
          {['docMinimize', 'docRestore', 'docClose'].map(name => (
            <ToolSlotStyle key={name} type="button" aria-label={name} $w={15}>
              <Glyph name={name} />
            </ToolSlotStyle>
          ))}
        </MenuControlsStyle>
      </MenuBarStyle>
    </HeaderRowsStyle>
  </HeaderStyle>
);

const Ribbon = () => (
  <>
    <RibbonTabsStyle>
      {ribbonTabs.map((name, i) => (
        <RibbonTabStyle key={name} type="button" $active={i === 0}>
          {name}
        </RibbonTabStyle>
      ))}
      <ToolSlotStyle type="button" aria-label="Minimize ribbon" $w={62}>
        <svg width="24" height="8" viewBox="0 0 24 8">
          <rect x="0" y="0" width="13" height="8" rx="2" fill="#eee" />
          <path d="M4 5H9L6.500 2z" fill="#333" />
          <path d="M18 3H23L20.500 6z" fill="#eee" />
        </svg>
      </ToolSlotStyle>
    </RibbonTabsStyle>
    <RibbonStyle>
      <Panel title="Draw" w={210}>
        <BigButton icon="line" label="Line" w={37} />
        <BigButton icon="polyline" label="Polyline" w={45} />
        <BigButton icon="circle" label="Circle" w={48} arrow />
        <BigButton icon="arc" label="Arc" w={39} arrow />
        <ToolGridStyle $columns="23px 10px">
          {['rectangle', 'ellipse', 'hatch'].map(name => (
            <React.Fragment key={name}>
              <Tool icon={name} />
              <Arrow w={5} />
            </React.Fragment>
          ))}
        </ToolGridStyle>
      </Panel>
      <Panel title="Modify" w={125}>
        <ToolGridStyle $columns="27px 27px 30px 3px 40px">
          <Tool icon="move" />
          <Tool icon="rotate" />
          <Tool icon="trim" />
          <Arrow w={5} />
          <Tool icon="erase" />
          <Tool icon="copy" />
          <Tool icon="mirror" />
          <Tool icon="fillet" />
          <Arrow w={5} />
          <Tool icon="explode" />
          <Tool icon="stretch" />
          <Tool icon="scale" />
          <Tool icon="array" />
          <Arrow w={5} />
          <Tool icon="offset" />
        </ToolGridStyle>
      </Panel>
      <Panel title="Annotation" w={139}>
        <BigButton icon="text" label="Text" w={44} arrow />
        <BigButton icon="dimension" label="Dimension" w={56} />
        <ToolGridStyle $columns="28px 4px">
          <Tool icon="linear" />
          <Arrow w={5} />
          <Tool icon="leader" />
          <Arrow w={5} />
          <Tool icon="table" />
        </ToolGridStyle>
      </Panel>
      <Panel title="Layers" w={257}>
        <BigButton icon="layerProps" label={'Layer\nProperties'} w={58} />
        <StackStyle>
          <Combo w={197} left={3} gap={4} label="Layer" value="0">
            <Glyph name="bulb" />
            <Glyph name="sun" size={20} />
            <Glyph name="lock" />
            <Glyph name="swatch" />
          </Combo>
          <ToolGridStyle $columns="repeat(5, 23px)">
            {layerTools.map(name => (
              <Tool key={name} icon={name} />
            ))}
          </ToolGridStyle>
        </StackStyle>
      </Panel>
      <Panel title="Block" w={75}>
        <BigButton icon="insert" label="Insert" w={40} />
        <ToolGridStyle $columns="20px 12px">
          <Tool icon="createBlock" />
          <span />
          <Tool icon="editBlock" />
          <span />
          <Tool icon="attributes" />
          <Arrow w={5} />
        </ToolGridStyle>
      </Panel>
      <Panel title="Properties" w={209} spread>
        <BigButton icon="match" label={'Match\nProperties'} w={60} />
        <ToolGridStyle $columns="18px">
          <Tool icon="wheel" />
          <Tool icon="weights" />
          <Tool icon="linetypes" />
        </ToolGridStyle>
        <StackStyle>
          <Combo w={129} left={10} gap={8} label="Colour" value="ByLayer">
            <Glyph name="swatch" />
          </Combo>
          <Combo w={129} left={6} gap={3} label="Lineweight" value="1.00 mm">
            <svg width="56" height="10">
              <rect width="56" height="10" fill="#fff" />
            </svg>
          </Combo>
          <Combo w={129} left={6} gap={1} label="Linetype" value="ACAD_...">
            <svg width="57" height="10">
              <path d="M1 5.500H21M26 5.500H47M52 5.500H57" stroke="#e4e4e4" />
            </svg>
          </Combo>
        </StackStyle>
      </Panel>
      <Panel title="Groups" w={66}>
        <BigButton icon="group" label="Group" w={40} />
        <ToolGridStyle $columns="22px">
          <Tool icon="ungroup" />
          <Tool icon="groupEdit" />
          <Tool icon="groupSelect" pressed />
        </ToolGridStyle>
      </Panel>
      <CollapsedPanelStyle type="button">
        <Glyph name="calculator" size={30} />
        <span>Utilities</span>
        <Arrow />
      </CollapsedPanelStyle>
      <CollapsedPanelStyle type="button">
        <Glyph name="clipboard" size={30} />
        <span>Clipboard</span>
        <Arrow />
      </CollapsedPanelStyle>
      <CollapsedPanelStyle type="button">
        <Glyph name="view" size={30} />
        <span>View</span>
        <Arrow />
      </CollapsedPanelStyle>
    </RibbonStyle>
  </>
);

const ModelSpace = () => (
  <ModelSpaceStyle aria-label="Model space">
    <defs>
      <pattern
        id="grid"
        x="8"
        y="5"
        width="36"
        height="36"
        patternUnits="userSpaceOnUse"
      >
        <path
          d="M7.500 0V36M14.500 0V36M22.500 0V36M29.500 0V36M0 7.500H36M0 14.500H36M0 22.500H36M0 29.500H36"
          stroke="#28303b"
        />
        <path d="M.5 0V36M0 .5H36" stroke="#323b47" />
      </pattern>
    </defs>
    <rect width="100%" height="100%" fill="url(#grid)" />
    <path d="M80.500 0V392" stroke="#2c6a35" />
    <rect x="126" y="435" width="100%" height="2" fill="#64222c" />
    <rect x="77" y="390" width="5" height="45" fill="#63b463" />
    <rect x="80" y="433" width="46" height="5" rx="1" fill="#c65a5c" />
    <circle cx="79.500" cy="435" r="2.500" fill="#69a8ee" />
    <g fontSize="15" textAnchor="middle">
      <text x="83" y="388" fill="#2f9a3a">
        Y
      </text>
      <text x="127" y="433" fill="#d22f38">
        X
      </text>
      <text x="84" y="433" fill="#3d6cc4">
        Z
      </text>
    </g>
    <path
      d="M500.500 136.500H789.500V338.500H500.500z"
      fill="none"
      stroke="#dfe3e7"
      strokeDasharray="34.7 8.5"
    />
    <path
      d="M803 117.500H831M838 117.500H867M834.500 86V114M834.500 121V149"
      stroke="#f2f2f2"
    />
    <rect
      x="831.500"
      y="114.500"
      width="6"
      height="6"
      fill="none"
      stroke="#f2f2f2"
    />
  </ModelSpaceStyle>
);

const Navigation = () => (
  <NavigationStyle>
    <CubeStyle>
      <svg width="90" height="89" viewBox="0 0 90 89">
        <circle
          cx="45"
          cy="44"
          r="35"
          fill="none"
          stroke="#4d515b"
          strokeWidth="9"
        />
        <rect x="29" y="27" width="33" height="33" fill="#c3c5c8" />
        <rect x="35" y="33" width="21" height="21" fill="#b2b6bd" />
        <text className="face" x="45" y="47">
          TOP
        </text>
        <text x="45" y="12">
          N
        </text>
        <text x="82" y="49">
          E
        </text>
        <text x="45" y="86">
          S
        </text>
        <text x="8" y="49">
          W
        </text>
      </svg>
    </CubeStyle>
    <UcsPickerStyle>
      <select aria-label="Coordinate system">
        <option>Unnamed</option>
      </select>
      <Arrow color="#c9ccd6" />
    </UcsPickerStyle>
    <NavBarStyle>
      <svg
        width="28"
        height="198"
        viewBox="0 0 28 198"
        fill="none"
        stroke="#43484f"
      >
        <circle cx="23" cy="5" r="3" />
        <circle cx="15" cy="28" r="10" />
        <circle cx="15" cy="28" r="5" />
        <path d="M15 18H24V28M13 46H17L15 48z" />
        <path d="M9 78 5 69 7 68 11 72 8 61 10 60 13 69 13 58H15L16 69 19 60 21 61 19 71 23 66 24 68 20 78z" />
        <path d="M5 85 18 98M18 85 5 98M5 89V85H9M14 85H18V89M5 94V98H9" />
        <circle cx="18" cy="98" r="5" />
        <path d="M22 102 26 106M13 112H17L15 114z" />
        <path d="M15 120 11 124H13V138H17V124H19zM9 127Q3 130 10 134H20Q27 130 20 127M8 131 5 134 9 137" />
        <path d="M13 147H17L15 149z" />
        <path d="M4 158H10V164H4zM12 158H18V164H12zM20 158H25V164H20zM4 168H19V180H4z" />
        <path d="M9 170V177L15 173z" fill="#43484f" />
        <circle cx="23" cy="193" r="3" />
      </svg>
    </NavBarStyle>
  </NavigationStyle>
);

const CommandDock = () => (
  <CommandDockStyle>
    <HistoryStyle>
      <HistoryLineStyle $tone="#9b9ea2">RECTANG</HistoryLineStyle>
      <HistoryLineStyle $tone="#b9bbbe">
        Specify first corner point or [Chamfer/Elevation/Fillet/Thickness/Width]:
      </HistoryLineStyle>
      <HistoryLineStyle $tone="#dcdddf">
        Specify other corner point or [Area/Dimensions/Rotation]:
      </HistoryLineStyle>
    </HistoryStyle>
    <CommandBarStyle>
      <CommandToolsStyle>
        <svg width="8" height="16" viewBox="0 0 8 16">
          <path
            d="M1.500 1V15M4.500 1V15M7.500 1V15"
            stroke="#bbb"
            strokeDasharray="1 1"
          />
        </svg>
        <ToolSlotStyle type="button" aria-label="Close command line" $w={14}>
          <Glyph name="cmdClose" />
        </ToolSlotStyle>
        <ToolSlotStyle type="button" aria-label="Customise command line" $w={26}>
          <Glyph name="wrench" />
        </ToolSlotStyle>
      </CommandToolsStyle>
      <ToolSlotStyle type="button" aria-label="Recent commands">
        <Glyph name="prompt" />
      </ToolSlotStyle>
      <Arrow w={5} color="#555" />
      <CommandInputStyle aria-label="Command" placeholder="Type a command" />
      <ToolSlotStyle type="button" aria-label="Command history" $w={14}>
        <Arrow up color="#222" />
      </ToolSlotStyle>
    </CommandBarStyle>
  </CommandDockStyle>
);

const Footer = () => (
  <FooterStyle>
    <LayoutTabStyle type="button" $w={56} $active>
      Model
    </LayoutTabStyle>
    <LayoutTabStyle type="button" $w={61}>
      Layout1
    </LayoutTabStyle>
    <LayoutTabStyle type="button" $w={61}>
      Layout2
    </LayoutTabStyle>
    <NewTabStyle type="button" aria-label="New layout" $bottom>
      <Glyph name="plus" />
    </NewTabStyle>
    <StatusBarStyle>
      <StatusGroupStyle>
        <Slot text="MODEL" w={46} />
      </StatusGroupStyle>
      <StatusGroupStyle>
        <Slot icon="grid" w={22} />
        <Slot icon="snap" w={24} />
        <Slot w={14} label="Snap list" />
      </StatusGroupStyle>
      <StatusGroupStyle>
        <Slot icon="dynamic" w={24} line />
        <Slot icon="ortho" w={22} />
        <Slot icon="polar" w={24} />
        <Slot w={12} label="Polar list" />
        <Slot icon="iso" w={24} />
        <Slot w={14} line label="Isodraft list" />
        <Slot icon="tracking" w={22} />
        <Slot icon="osnap" w={24} />
        <Slot w={14} label="Snap settings" />
      </StatusGroupStyle>
      <StatusGroupStyle>
        <Slot icon="annoOn" w={24} />
        <Slot icon="annoAuto" w={22} />
        <Slot icon="anno" w={22} />
        <Slot text="1:1" w={20} />
        <Slot w={12} label="Scale list" />
      </StatusGroupStyle>
      <StatusGroupStyle>
        <Slot icon="gear" w={22} />
        <Slot w={16} line label="Workspace list" />
        <Slot icon="bigPlus" w={22} />
      </StatusGroupStyle>
      <StatusGroupStyle>
        <Slot icon="ruler" w={24} />
        <Slot text="Decimal" w={50} />
        <Slot w={20} line label="Units list" />
        <Slot icon="quick" w={22} />
      </StatusGroupStyle>
      <StatusGroupStyle>
        <Slot icon="lockUi" w={24} />
        <Slot w={14} line label="Lock list" />
        <Slot icon="isolate" w={24} />
      </StatusGroupStyle>
      <StatusGroupStyle>
        <Slot icon="performance" w={24} />
      </StatusGroupStyle>
      <StatusGroupStyle>
        <Slot icon="fullscreen" w={22} />
        <Slot icon="menu" w={22} />
      </StatusGroupStyle>
    </StatusBarStyle>
  </FooterStyle>
);

const App = () => (
  <AppStyle>
    <GlobalStyle />
    <Defs />
    <Header />
    <Ribbon />
    <FileTabsStyle>
      <FileTabStyle type="button">Start</FileTabStyle>
      <FileTabStyle type="button" $active>
        Drawing1*
        <Glyph name="tabClose" size={14} />
      </FileTabStyle>
      <NewTabStyle type="button" aria-label="New drawing">
        <Glyph name="plus" />
      </NewTabStyle>
    </FileTabsStyle>
    <WorkspaceStyle>
      <ViewportStyle>
        <ModelSpace />
        <ViewLabelStyle>[−][Top][Realistic]</ViewLabelStyle>
        <Navigation />
        <CommandDock />
      </ViewportStyle>
      <EdgeStripStyle />
    </WorkspaceStyle>
    <Footer />
  </AppStyle>
);

export default App;
